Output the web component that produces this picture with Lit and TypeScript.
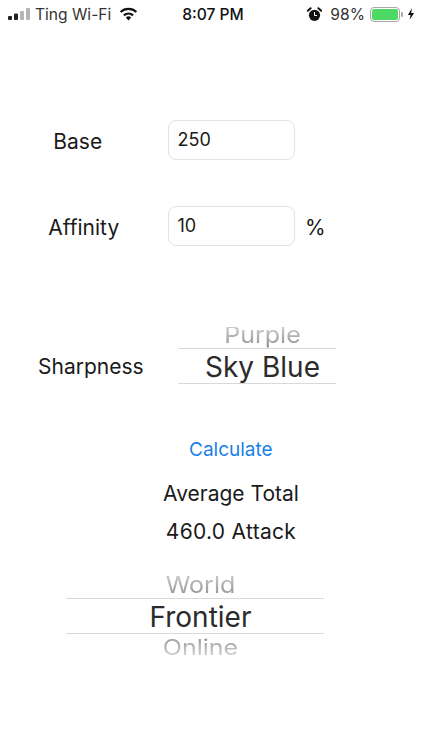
import { LitElement, html, css } from "lit";
import { customElement, property } from "lit/decorators.js";

@customElement("wheel-picker")
class WheelPicker extends LitElement {
  @property() above = "";
  @property() value = "";
  @property() below = "";
  static styles = css`
    :host { display: flex; flex-direction: column; align-items: stretch; --above-h: 24px; }
    .side { overflow: hidden; font-size: 25px; color: #8e8e8e; display: flex; justify-content: center; padding-left: 11px; }
    .side span { display: block; line-height: 24px; }
    .above { height: var(--above-h); align-items: flex-end; -webkit-mask-image: linear-gradient(to bottom, rgba(0,0,0,0.45), #000); }
    .above span { transform: translateY(-1px) scaleY(0.92); }
    .below { height: 25px; align-items: flex-start; -webkit-mask-image: linear-gradient(to top, rgba(0,0,0,0.3), #000); }
    .below span { transform: translateY(3px) scaleY(0.86); transform-origin: top; }
    .current { height: 36px; box-sizing: border-box; border-top: 1px solid #d9d9d9; border-bottom: 1px solid #d9d9d9; font-size: 28px; line-height: 37px; color: #2b2b2b; text-align: center; white-space: nowrap; padding-left: 11px; }
  `;
  render() {
    return html`
      <div class="side above"><span>${this.above}</span></div>
      <div class="current">${this.value}</div>
      ${this.below ? html`<div class="side below"><span>${this.below}</span></div>` : ""}
    `;
  }
}

@customElement("app-root")
class AppRoot extends LitElement {
  static styles = css`
    :host { display: block; width: 422px; height: 750px; overflow: hidden; background: #fff; font-family: Inter, "Liberation Sans", sans-serif; color: #1a1a1a; }
    .status { height: 30px; display: grid; grid-template-columns: 1fr auto 1fr; align-items: center; font-size: 15.6px; color: #333; padding: 0 7px 2px 8px; box-sizing: border-box; }
    .left, .right { display: flex; align-items: center; }
    .left { gap: 5px; }
    .right { justify-content: flex-end; }
    .time { font-weight: 500; color: #111; margin-left: 3px; }
    .wifi { margin-left: 3px; }
    .pct { margin: 0 5px 0 8px; }
    .bolt { margin-left: 4px; }
    .form { display: grid; grid-template-columns: 167.5px 127.5px auto; margin-top: 90px; row-gap: 46px; align-items: center; }
    .label { font-size: 21px; justify-self: center; padding-top: 2px; }
    .label.base { margin-left: -12px; }
    .label.aff { margin-left: 0; }
    .input { height: 40px; box-sizing: border-box; border: 1px solid #e3e3e3; border-radius: 8px; display: flex; align-items: center; padding: 0 0 2px 9px; font-size: 18px; }
    .unit { font-size: 21px; margin-left: 10px; padding-top: 2px; }
    .sharp { display: grid; grid-template-columns: 178px 158px; margin-top: 81px; }
    .sharp .label { justify-self: start; align-self: end; margin: 0 0 -1px 38px; line-height: 36px; }
    .sharp wheel-picker { --above-h: 21px; }
    .calc { margin: 54px 0 0 189px; font-size: 19px; color: #1a7fe8; line-height: 24px; }
    .out { text-align: center; width: 462px; font-size: 21px; line-height: 24px; }
    .avg { margin-top: 20px; }
    .atk { margin-top: 14px; letter-spacing: 0.3px; }
    .bottom { width: 258px; margin: 30px 0 0 66px; }
  `;
  render() {
    return html`
      <div class="status">
        <div class="left">
          <svg width="22" height="12" viewBox="0 0 22 12">
            <rect x="0" y="8" width="4" height="4" rx="1" fill="#222" />
            <rect x="6" y="5.5" width="4" height="6.5" rx="1" fill="#222" />
            <rect x="12" y="3" width="4" height="9" rx="1" fill="#b5b5b5" />
            <rect x="18" y="0" width="4" height="12" rx="1" fill="#b5b5b5" />
          </svg>
          <span>Ting Wi-Fi</span>
          <svg class="wifi" width="19" height="14" viewBox="0 0 19 14">
            <path d="M9.5 13.5 L6.8 10.4 A4 4 0 0 1 12.2 10.4 Z" fill="#111" />
            <path d="M4.9 8.4 A7 7 0 0 1 14.1 8.4" fill="none" stroke="#111" stroke-width="2.2" />
            <path d="M1.6 5 A11.6 11.6 0 0 1 17.4 5" fill="none" stroke="#111" stroke-width="2.2" />
          </svg>
        </div>
        <div class="time">8:07 PM</div>
        <div class="right">
          <svg width="15" height="15" viewBox="0 0 15 15">
            <circle cx="7.5" cy="8.3" r="5.6" fill="#111" />
            <path d="M7.5 5 V8.5 H10" fill="none" stroke="#fff" stroke-width="1" />
            <path d="M0.8 3.8 L3.6 1.2 M14.2 3.8 L11.4 1.2" stroke="#111" stroke-width="2" stroke-linecap="round" />
          </svg>
          <span class="pct">98%</span>
          <svg width="33" height="15" viewBox="0 0 33 15">
            <rect x="0.5" y="0.5" width="29" height="14" rx="3.5" fill="none" stroke="#a8a8a8" />
            <rect x="2" y="2" width="26" height="11" rx="2" fill="#4cd964" />
            <path d="M31 5 A2.5 2.5 0 0 1 31 10 Z" fill="#a8a8a8" />
          </svg>
          <svg class="bolt" width="8" height="14" viewBox="0 0 9 14">
            <path d="M5.5 0.5 L1 8 H4 L3 13.5 L8 5.8 H4.8 Z" fill="#111" />
          </svg>
        </div>
      </div>
      <div class="form">
        <div class="label base">Base</div>
        <div class="input">250</div>
        <div></div>
        <div class="label aff">Affinity</div>
        <div class="input">10</div>
        <div class="unit">%</div>
      </div>
      <div class="sharp">
        <div class="label">Sharpness</div>
        <wheel-picker above="Purple" value="Sky Blue"></wheel-picker>
      </div>
      <div class="calc">Calculate</div>
      <div class="out avg">Average Total</div>
      <div class="out atk">460.0 Attack</div>
      <wheel-picker class="bottom" above="World" value="Frontier" below="Online"></wheel-picker>
    `;
  }
}
